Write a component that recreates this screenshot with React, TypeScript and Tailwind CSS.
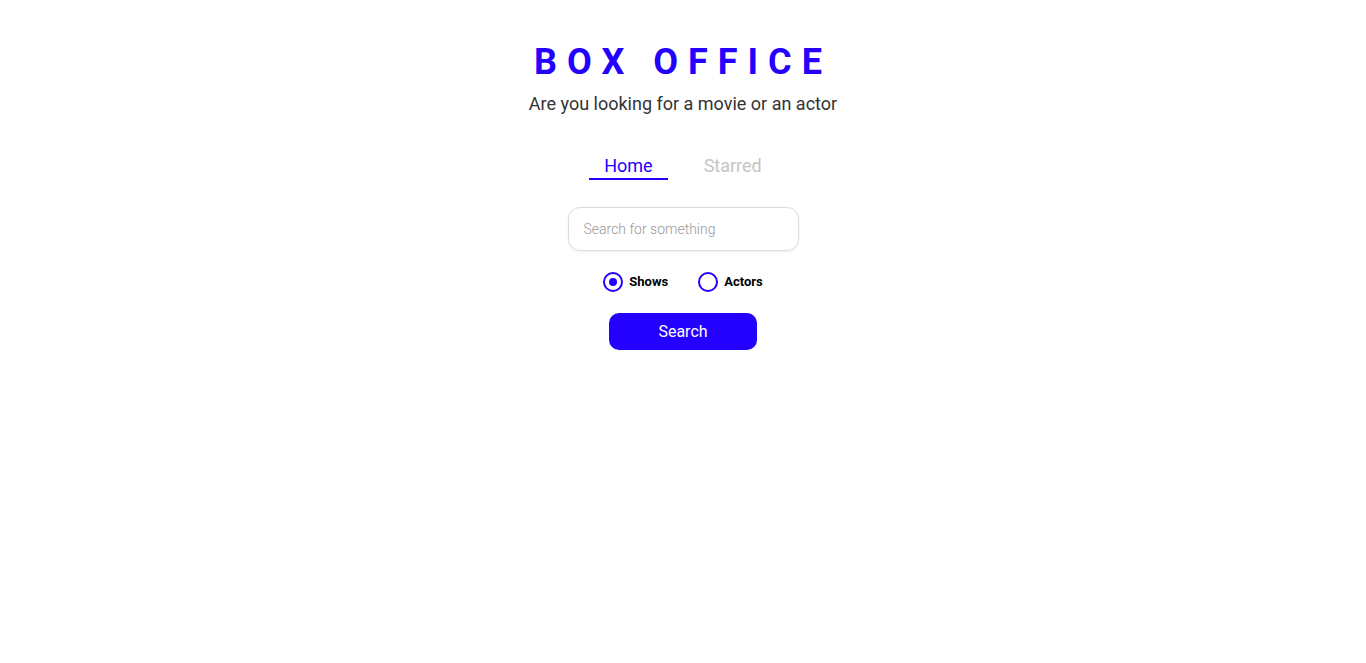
import React, { useState } from 'react';

const Radio: React.FC<{ label: string; checked: boolean; onChange: () => void }> = ({ label, checked, onChange }) => (
  <label className="flex items-center gap-[6px] cursor-pointer">
    <span className="w-5 h-5 rounded-full border-2 border-[#2400ff] flex items-center justify-center">
      {checked && <span className="w-2 h-2 rounded-full bg-[#2400ff]" />}
    </span>
    <input type="radio" className="hidden" checked={checked} onChange={onChange} />
    <span className="text-[13px] font-bold text-black">{label}</span>
  </label>
);

export default function App() {
  const [type, setType] = useState<'shows' | 'actors'>('shows');
  const [query, setQuery] = useState('');

  return (
    <div className="min-h-screen bg-white font-['Roboto',sans-serif] flex flex-col items-center">
      {/* Title */}
      <div className="pt-[40px] flex flex-col items-center">
        <h1 className="text-[36px] font-bold text-[#2400ff] tracking-[10px] leading-[44px]">BOX OFFICE</h1>
        <p className="text-[18px] text-[#333] mt-[9px] leading-[22px]">Are you looking for a movie or an actor</p>
      </div>

      {/* Nav */}
      <nav className="flex gap-[21px] mt-[40px] text-[18px] leading-[22px]">
        <a className="px-[15px] pb-[1px] text-[#2400ff] border-b-2 border-[#2400ff]">Home</a>
        <a className="px-[15px] pb-[1px] text-[#c4c4c4]">Starred</a>
      </nav>

      {/* Search */}
      <input
        type="text"
        value={query}
        onChange={(e) => setQuery(e.target.value)}
        placeholder="Search for something"
        className="mt-[27px] w-[231px] h-[44px] px-[15px] rounded-[12px] border border-[#dcdcdc] shadow-[0_1px_3px_rgba(0,0,0,0.06)] text-[14px] font-light outline-none placeholder:text-[#999]"
      />

      <div className="flex gap-[30px] mt-[21px]">
        <Radio label="Shows" checked={type === 'shows'} onChange={() => setType('shows')} />
        <Radio label="Actors" checked={type === 'actors'} onChange={() => setType('actors')} />
      </div>

      <button className="mt-[21px] w-[148px] h-[37px] rounded-[10px] bg-[#2400ff] text-white text-[16px]">
        Search
      </button>
    </div>
  );
}
